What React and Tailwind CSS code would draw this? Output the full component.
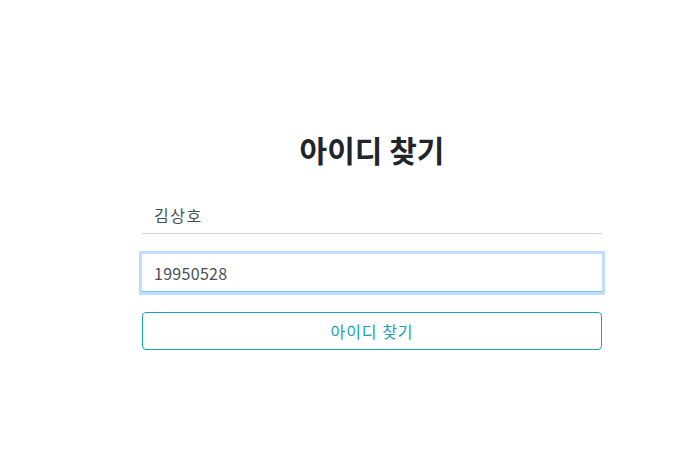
import React, { useState } from 'react';

const App = () => {
  const [name, setName] = useState('김상호');
  const [birth, setBirth] = useState('19950528');

  return (
    <div
      className="min-h-screen bg-white"
      style={{ fontFamily: '"Noto Sans CJK KR", "Noto Sans", sans-serif' }}
    >
      <div className="ml-[142px] w-[460px] pt-[132px]">
        <h2 className="text-center text-[30px] leading-[34px] font-bold text-[#212529] mb-[30px]">
          아이디 찾기
        </h2>

        {/* Name */}
        <input
          type="text"
          value={name}
          onChange={(e) => setName(e.target.value)}
          className="block w-full h-[38px] px-3 text-base tracking-[1.5px] text-[#495057] border-0 border-b border-[#ced4da] outline-none"
        />

        {/* Birth date (focused) */}
        <input
          type="text"
          value={birth}
          autoFocus
          onChange={(e) => setBirth(e.target.value)}
          className="block w-full h-[38px] mt-[20px] px-3 text-base tracking-[0.3px] text-[#495057] border-0 border-b border-[#80bdff] outline-none shadow-[0_0_0_3px_rgba(0,123,255,0.25)] caret-[#212529]"
        />

        <button className="block w-full h-[38px] mt-[20px] rounded border border-[#17a2b8] text-base tracking-[1px] text-[#17a2b8] bg-white">
          아이디 찾기
        </button>
      </div>
    </div>
  );
};

export default App;
